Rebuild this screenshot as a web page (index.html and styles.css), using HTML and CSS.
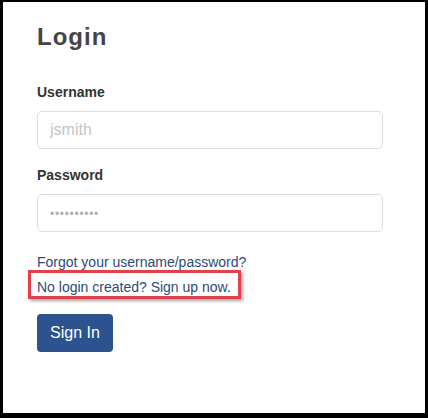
FILE: index.html
```html
<!DOCTYPE html>
<html>
<head>
<meta charset="utf-8">
<link rel="stylesheet" href="styles.css">
</head>
<body>
<div class="frame">
  <h1 class="title">Login</h1>
  <label class="label" for="user">Username</label>
  <input class="field" id="user" type="text" placeholder="jsmith">
  <label class="label label-pw" for="pw">Password</label>
  <input class="field field-pw" id="pw" type="password" placeholder="••••••••••">
  <a class="link link-forgot" href="#">Forgot your username/password?</a>
  <div class="highlight"><a class="link link-signup" href="#">No login created? Sign up now.</a></div>
  <button class="btn" type="button">Sign In</button>
</div>
</body>
</html>
```
FILE: styles.css
```css
html, body {
  margin: 0;
  padding: 0;
  background: #000;
}
.frame {
  box-sizing: border-box;
  width: 428px;
  height: 418px;
  background: #fff;
  border-style: solid;
  border-color: #000;
  border-width: 2px 3px 5px 3px;
  padding: 21px 42px 0 34px;
  font-family: "Liberation Sans", Arial, sans-serif;
  display: flex;
  flex-direction: column;
  align-items: flex-start;
}
.title {
  margin: 0;
  font-size: 24px;
  line-height: 28px;
  font-weight: bold;
  color: #444;
  letter-spacing: 1px;
}
.label {
  display: block;
  margin-top: 31px;
  font-size: 14px;
  line-height: 20px;
  font-weight: bold;
  color: #333;
}
.label-pw {
  margin-top: 16px;
}
.field {
  box-sizing: border-box;
  margin: 9px 0 0 0;
  width: 346px;
  height: 38px;
  border: 1px solid #dcdcdc;
  border-radius: 5px;
  padding: 0 12px;
  font-family: "Liberation Sans", Arial, sans-serif;
  font-size: 16px;
  color: #333;
  background: #fff;
  outline: none;
}
.field::placeholder {
  color: #c4c4c4;
}
.field-pw::placeholder {
  font-size: 12px;
  letter-spacing: 0.7px;
  color: #b0b0b0;
}
.link {
  font-size: 14px;
  color: #2c4a78;
  text-decoration: none;
}
.link-forgot {
  display: block;
  margin-top: 22px;
  line-height: 16px;
}
.highlight {
  margin-left: -9px;
  border: 3px solid #e2404a;
  padding: 5px 7px 0 6px;
  box-shadow: 2px 2px 3px rgba(0, 0, 0, 0.35);
}
.link-signup {
  display: block;
  line-height: 18px;
}
.btn {
  margin-top: 15px;
  box-sizing: border-box;
  height: 38px;
  padding: 0 13px;
  border: none;
  border-radius: 4px;
  background: #2c5290;
  color: #fff;
  font-family: "Liberation Sans", Arial, sans-serif;
  font-size: 16px;
  line-height: 18px;
}
```
